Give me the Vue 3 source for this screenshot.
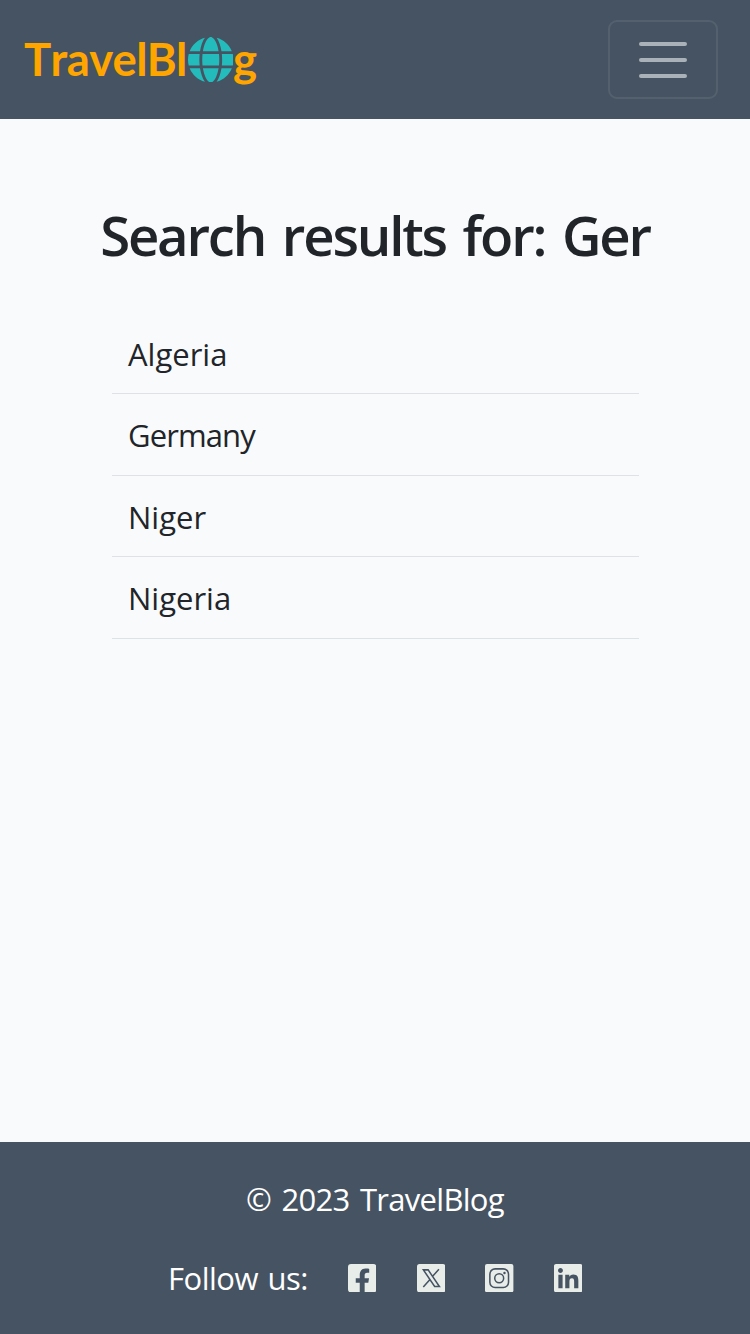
<script setup>
const results = ['Algeria', 'Germany', 'Niger', 'Nigeria']
</script>

<template>
  <div class="page">
    <header class="navbar">
      <a class="brand"><span class="brand-main">TravelBl</span><svg class="globe" viewBox="0 0 512 512"><path d="M352 256c0 22.2-1.2 43.6-3.3 64H163.3c-2.2-20.4-3.3-41.8-3.3-64s1.2-43.6 3.3-64H348.7c2.2 20.4 3.3 41.8 3.3 64zm28.8-64H503.9c5.3 20.5 8.1 41.9 8.1 64s-2.8 43.5-8.1 64H380.8c2.1-20.6 3.2-42 3.2-64s-1.1-43.4-3.2-64zm112.6-32H376.7c-10-63.9-29.8-117.4-55.3-151.6c78.3 20.7 142 77.5 171.9 151.6zm-149.1 0H167.7c6.1-36.4 15.5-68.6 27-94.7c10.5-23.6 22.2-40.7 33.5-51.5C239.4 3.2 248.7 0 256 0s16.6 3.2 27.8 13.8c11.3 10.8 23 27.9 33.5 51.5c11.6 26 20.9 58.2 27 94.7zm-209 0H18.6C48.6 85.9 112.2 29.1 190.6 8.4C165.1 42.6 145.3 96.1 135.3 160zM8.1 192H131.2c-2.1 20.6-3.2 42-3.2 64s1.1 43.4 3.2 64H8.1C2.8 299.5 0 278.1 0 256s2.8-43.5 8.1-64zM194.7 446.6c-11.6-26-20.9-58.2-27-94.6H344.3c-6.1 36.4-15.5 68.6-27 94.6c-10.5 23.6-22.2 40.7-33.5 51.5C272.6 508.8 263.3 512 256 512s-16.6-3.2-27.8-13.8c-11.3-10.8-23-27.9-33.5-51.5zM135.3 352c10 63.9 29.8 117.4 55.3 151.6C112.2 482.9 48.6 426.1 18.6 352H135.3zm358.1 0c-30 74.1-93.6 130.9-171.9 151.6c25.5-34.2 45.2-87.7 55.3-151.6H493.4z" /></svg><span>g</span></a>
      <button class="toggler" aria-label="Menu">
        <svg viewBox="0 0 30 30"><path d="M4 7h22M4 15h22M4 23h22" /></svg>
      </button>
    </header>

    <main>
      <h1>Search results for: Ger</h1>
      <ul class="results">
        <li v-for="name in results" :key="name">{{ name }}</li>
      </ul>
    </main>

    <footer>
      <p class="copyright">© 2023 TravelBlog</p>
      <div class="social">
        <span class="follow">Follow us:</span>
        <svg viewBox="0 32 448 448"><path d="M400 32H48A48 48 0 0 0 0 80v352a48 48 0 0 0 48 48h137.25V327.69h-63V256h63v-54.64c0-62.15 37-96.48 93.67-96.48 27.14 0 55.52 4.84 55.52 4.84v61h-31.27c-30.81 0-40.42 19.12-40.42 38.73V256h68.78l-11 71.69h-57.78V480H400a48 48 0 0 0 48-48V80a48 48 0 0 0-48-48z" /></svg>
        <svg viewBox="0 0 28 28">
          <rect width="28" height="28" rx="2.5" />
          <path class="mark" d="M6.3 5.8H11L22.1 22.2H17.4ZM21.6 5.2L15.2 12.4M12.8 15.2L6.2 22.8" />
        </svg>
        <svg viewBox="0 0 28 28">
          <rect width="28" height="28" rx="2" />
          <g class="mark">
            <rect x="4.8" y="4.8" width="18.4" height="18.4" rx="5.2" />
            <circle cx="14" cy="14" r="4.4" />
          </g>
          <circle class="lens" cx="19.2" cy="8.8" r="1.2" />
        </svg>
        <svg viewBox="0 32 448 448"><path d="M416 32H31.9C14.3 32 0 46.5 0 64.3v383.4C0 465.5 14.3 480 31.9 480H416c17.6 0 32-14.5 32-32.3V64.3c0-17.8-14.4-32.3-32-32.3zM135.4 416H69V202.2h66.5V416zm-33.2-243c-21.3 0-38.5-17.3-38.5-38.5S80.9 96 102.2 96c21.2 0 38.5 17.3 38.5 38.5 0 21.3-17.2 38.5-38.5 38.5zm282.1 243h-66.4V312c0-24.8-.5-56.7-34.5-56.7-34.6 0-39.9 27-39.9 54.9V416h-66.4V202.2h63.7v29.2h.9c8.9-16.8 30.6-34.5 62.9-34.5 67.2 0 79.7 44.3 79.7 101.9V416z" /></svg>
      </div>
    </footer>
  </div>
</template>

<style>
body {
  margin: 0;
}
</style>

<style scoped>
.page {
  display: flex;
  flex-direction: column;
  height: 1334px;
  background: #f9fafc;
  color: #212529;
  font-family: "Open Sans", "Noto Sans", sans-serif;
  font-size: 31px;
}
.navbar {
  box-sizing: border-box;
  display: flex;
  justify-content: space-between;
  align-items: center;
  height: 119px;
  padding: 0 32px 0 24px;
  background: #465362;
}
.brand {
  display: flex;
  align-items: center;
  color: #ffa500;
  font: 700 45.5px/60px Lato, sans-serif;
  font-kerning: none;
}
.brand span {
  margin-top: -2px;
}
.brand .brand-main {
  width: 163.5px;
  letter-spacing: -0.7px;
}
.globe {
  width: 45.5px;
  height: 45.5px;
  fill: #24bbbc;
}
.toggler {
  box-sizing: border-box;
  display: flex;
  align-items: center;
  justify-content: center;
  width: 110.5px;
  height: 79px;
  padding: 0;
  background: none;
  border: 2px solid rgba(255, 255, 255, 0.08);
  border-radius: 9px;
}
.toggler svg {
  width: 60px;
  height: 60px;
  fill: none;
  stroke: rgba(255, 255, 255, 0.55);
  stroke-width: 2;
  stroke-linecap: round;
}
main {
  flex: 1;
}
h1 {
  margin: 82px 0 0;
  font-size: 54.5px;
  font-weight: 560;
  line-height: 68px;
  letter-spacing: -2.2px;
  word-spacing: 4.8px;
  text-align: center;
  white-space: nowrap;
}
.results {
  width: 527px;
  margin: 44px 0 0 112px;
  padding: 0;
  list-style: none;
}
.results li {
  box-sizing: border-box;
  height: 81.4px;
  padding: 17px 16px 15px;
  border-bottom: 1px solid #dee2e6;
  line-height: 48px;
}
.results li:nth-child(2) {
  letter-spacing: -0.9px;
}
footer {
  box-sizing: border-box;
  height: 192px;
  padding-top: 33px;
  background: #465362;
  color: #fff;
}
.copyright {
  margin: 0;
  line-height: 48px;
  letter-spacing: -0.7px;
  word-spacing: 3px;
  text-align: center;
}
.social {
  display: flex;
  align-items: center;
  gap: 40.3px;
  height: 48px;
  margin: 31px 0 0 168px;
}
.social svg {
  width: 28.4px;
  height: 28.4px;
  fill: #e8ede9;
}
.follow {
  width: 139.6px;
  letter-spacing: -0.5px;
  word-spacing: 2px;
  white-space: nowrap;
}
.social .mark {
  fill: none;
  stroke: #465362;
  stroke-width: 1.5;
}
.social .lens {
  fill: #465362;
}
</style>
